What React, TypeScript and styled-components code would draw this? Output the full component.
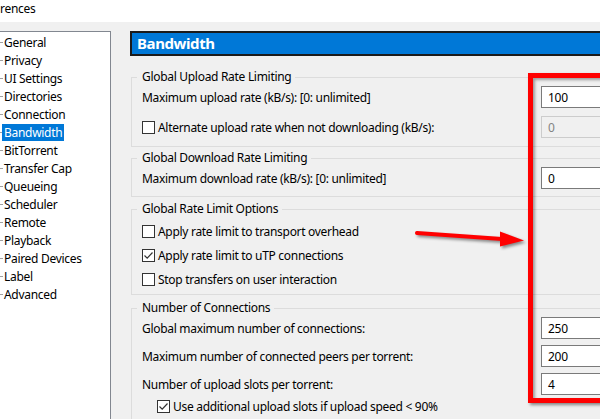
import React from 'react';
import styled, { createGlobalStyle } from 'styled-components';

const GlobalStyle = createGlobalStyle`
  html, body {
    margin: 0;
    padding: 0;
  }
  body {
    background: #f0f0f0;
    font-family: "Noto Sans", "Open Sans", sans-serif;
    font-size: 12px;
    letter-spacing: -0.3px;
    color: #000;
  }
`;

const Window = styled.div`
  position: relative;
  width: 600px;
  height: 419px;
  overflow: hidden;
  background: #f0f0f0;
`;

const TitleBar = styled.div`
  height: 22px;
  background: #fff;
  padding-top: 1px;
  box-sizing: border-box;
  line-height: 16px;
`;

const Body = styled.div`
  display: flex;
  padding-top: 9px;
  height: 397px;
  box-sizing: border-box;
`;

const TreePanel = styled.ul`
  list-style: none;
  margin: 0;
  padding: 1px 0 0;
  width: 111px;
  flex-shrink: 0;
  box-sizing: border-box;
  background: #fff;
  border: 1px solid #828790;
  border-left: none;
  border-bottom: none;
`;

const TreeItem = styled.li`
  display: flex;
  align-items: center;
  height: 18px;

  &::before {
    content: '';
    width: 2px;
    border-top: 1px dotted #a0a0a0;
  }
`;

const TreeLabel = styled.span<{ $selected?: boolean }>`
  padding: 0 2px;
  line-height: 17px;
  background: ${({ $selected }) => ($selected ? '#0078d7' : 'transparent')};
  color: ${({ $selected }) => ($selected ? '#fff' : '#000')};
`;

const Main = styled.div`
  margin-left: 19px;
  width: 500px;
  flex-shrink: 0;
  display: flex;
  flex-direction: column;
`;

const Header = styled.div`
  height: 30px;
  box-sizing: border-box;
  border: 2px solid #1b1b1b;
  background: #0078d7;
  color: #fff;
  font-weight: 700;
  font-size: 15px;
  letter-spacing: -0.4px;
  padding: 0 0 1px 5px;
  display: flex;
  align-items: center;
  margin-bottom: 13px;
`;

const Group = styled.fieldset<{ $top?: number; $bottom?: number; $gap?: number }>`
  margin: ${({ $gap }) => $gap ?? 0}px 1px 0;
  padding: ${({ $top }) => $top ?? 1}px 17px ${({ $bottom }) => $bottom ?? 7}px 10px;
  border: 1px solid #dcdcdc;
  min-width: 0;
`;

const Legend = styled.legend`
  margin-left: -5px;
  padding: 0 4px 0 5px;
  line-height: 16px;
`;

const Rows = styled.div<{ $gap: number }>`
  display: flex;
  flex-direction: column;
  gap: ${({ $gap }) => $gap}px;
`;

const Row = styled.div`
  display: grid;
  grid-template-columns: 1fr 70px;
  align-items: center;
  height: 22px;
`;

const Input = styled.div<{ $disabled?: boolean }>`
  height: 22px;
  box-sizing: border-box;
  border: 1px solid ${({ $disabled }) => ($disabled ? '#cccccc' : '#7a7a7a')};
  background: ${({ $disabled }) => ($disabled ? '#f0f0f0' : '#fff')};
  color: ${({ $disabled }) => ($disabled ? '#838383' : '#000')};
  padding: 0 6px;
  display: flex;
  align-items: center;
`;

const CheckRow = styled.label<{ $indent?: number; $height?: number }>`
  display: flex;
  align-items: center;
  gap: 3px;
  height: ${({ $height }) => $height ?? 22}px;
  margin-left: ${({ $indent }) => $indent ?? 0}px;
`;

const Box = styled.span`
  width: 13px;
  height: 13px;
  box-sizing: border-box;
  border: 1px solid #333;
  background: #fff;
  display: flex;
  align-items: center;
  justify-content: center;
  flex-shrink: 0;
`;

const RedFrame = styled.div`
  position: absolute;
  left: 528px;
  top: 73px;
  width: 140px;
  height: 330px;
  box-sizing: border-box;
  border: 5px solid #ff0000;
  box-shadow: 2px 2px 3px rgba(0, 0, 0, 0.45), inset 2px 2px 3px rgba(0, 0, 0, 0.35);
  pointer-events: none;
`;

const Arrow = styled.svg`
  position: absolute;
  left: 410px;
  top: 224px;
  filter: drop-shadow(2px 2px 1.5px rgba(0, 0, 0, 0.45));
`;

const Check: React.FC<{ checked?: boolean; children: React.ReactNode; indent?: number; height?: number }> = ({
  checked,
  children,
  indent,
  height,
}) => (
  <CheckRow $indent={indent} $height={height}>
    <Box>
      {checked && (
        <svg width="11" height="11" viewBox="0 0 11 11">
          <path d="M1.5 5.5 L4.2 8.2 L9.5 2.5" fill="none" stroke="#333" strokeWidth="1.2" />
        </svg>
      )}
    </Box>
    <span>{children}</span>
  </CheckRow>
);

const treeItems = [
  'General',
  'Privacy',
  'UI Settings',
  'Directories',
  'Connection',
  'Bandwidth',
  'BitTorrent',
  'Transfer Cap',
  'Queueing',
  'Scheduler',
  'Remote',
  'Playback',
  'Paired Devices',
  'Label',
  'Advanced',
];

export default function App() {
  return (
    <Window>
      <GlobalStyle />
      <TitleBar>rences</TitleBar>
      <Body>
        <TreePanel>
          {treeItems.map((item) => (
            <TreeItem key={item}>
              <TreeLabel $selected={item === 'Bandwidth'}>{item}</TreeLabel>
            </TreeItem>
          ))}
        </TreePanel>
        <Main>
          <Header>Bandwidth</Header>

          <Group $bottom={8}>
            <Legend>Global Upload Rate Limiting</Legend>
            <Rows $gap={8}>
              <Row>
                <span>Maximum upload rate (kB/s): [0: unlimited]</span>
                <Input>100</Input>
              </Row>
              <Row>
                <Check>Alternate upload rate when not downloading (kB/s):</Check>
                <Input $disabled>0</Input>
              </Row>
            </Rows>
          </Group>

          <Group $gap={3}>
            <Legend>Global Download Rate Limiting</Legend>
            <Rows $gap={0}>
              <Row>
                <span>Maximum download rate (kB/s): [0: unlimited]</span>
                <Input>0</Input>
              </Row>
            </Rows>
          </Group>

          <Group $gap={4} $top={2} $bottom={3}>
            <Legend>Global Rate Limit Options</Legend>
            <Rows $gap={0}>
              <Check height={24}>Apply rate limit to transport overhead</Check>
              <Check height={24} checked>
                Apply rate limit to uTP connections
              </Check>
              <Check height={24}>Stop transfers on user interaction</Check>
            </Rows>
          </Group>

          <Group $gap={5}>
            <Legend>Number of Connections</Legend>
            <Rows $gap={6}>
              <Row>
                <span>Global maximum number of connections:</span>
                <Input>250</Input>
              </Row>
              <Row>
                <span>Maximum number of connected peers per torrent:</span>
                <Input>200</Input>
              </Row>
              <Row>
                <span>Number of upload slots per torrent:</span>
                <Input>4</Input>
              </Row>
            </Rows>
            <Check indent={15} checked>
              Use additional upload slots if upload speed &lt; 90%
            </Check>
          </Group>
        </Main>
      </Body>

      <RedFrame />
      <Arrow width="120" height="30" viewBox="0 0 120 30">
        <path d="M7 9 L92 15" stroke="#ff0000" strokeWidth="4" strokeLinecap="round" />
        <polygon points="90,7.5 114,16.5 90,22.5" fill="#ff0000" />
      </Arrow>
    </Window>
  );
}
